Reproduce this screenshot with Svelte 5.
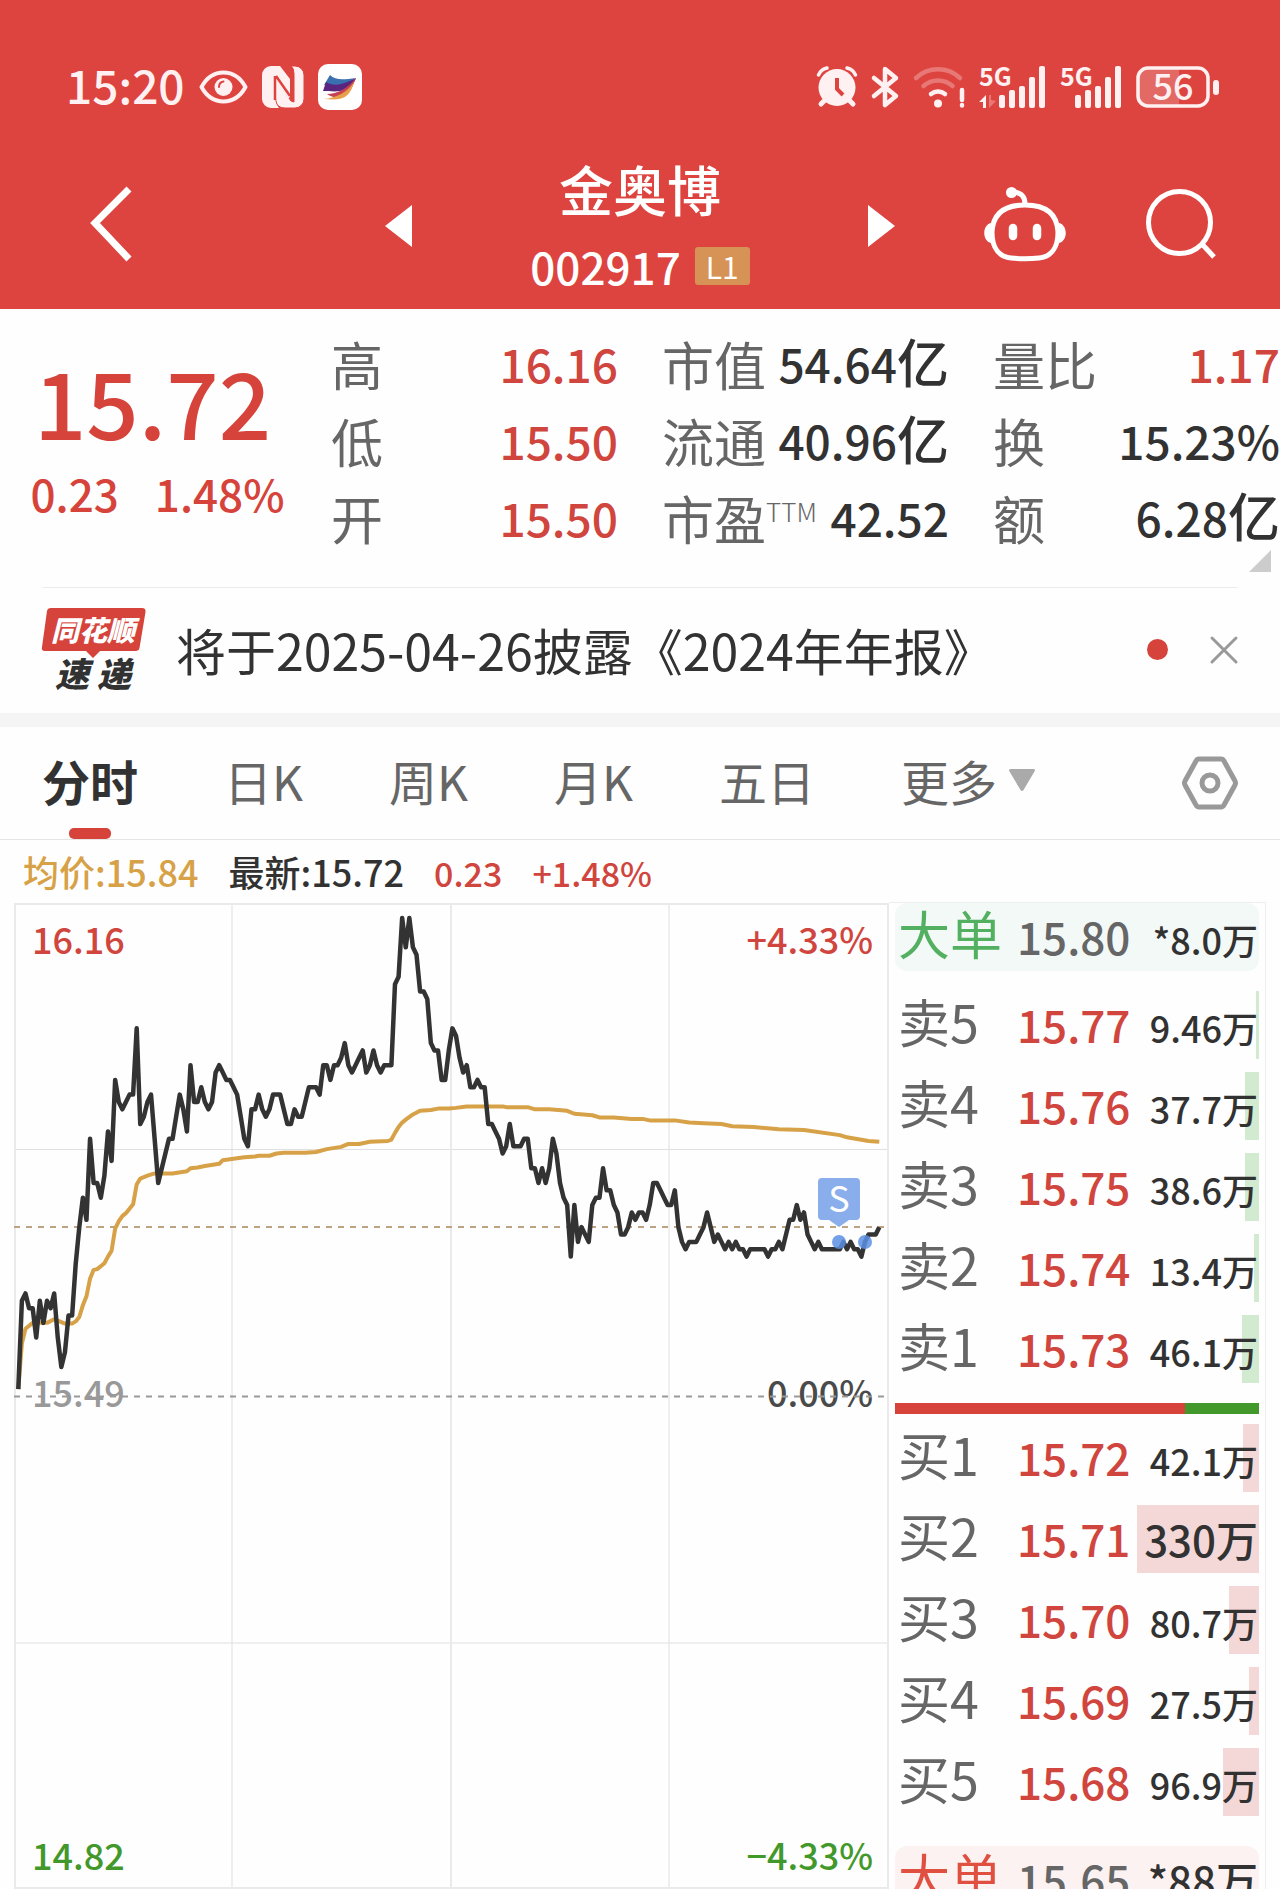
<script lang="ts">
  interface Order {
    label: string
    price: string
    volume: string
    amount: number
  }

  const base = 15.49
  const high = 16.16
  const low = 14.82

  const stats = [
    [
      { name: '高', value: '16.16', up: true },
      { name: '低', value: '15.50', up: true },
      { name: '开', value: '15.50', up: true }
    ],
    [
      { name: '市值', value: '54.64', unit: '亿' },
      { name: '流通', value: '40.96', unit: '亿' },
      { name: '市盈', sup: 'TTM', value: '42.52' }
    ],
    [
      { name: '量比', value: '1.17', up: true },
      { name: '换', value: '15.23%' },
      { name: '额', value: '6.28', unit: '亿' }
    ]
  ]

  const tabs = ['分时', '日K', '周K', '月K', '五日']
  let active = $state('分时')
  let noticeOpen = $state(true)

  const asks: Order[] = [
    { label: '卖5', price: '15.77', volume: '9.46万', amount: 9.46 },
    { label: '卖4', price: '15.76', volume: '37.7万', amount: 37.7 },
    { label: '卖3', price: '15.75', volume: '38.6万', amount: 38.6 },
    { label: '卖2', price: '15.74', volume: '13.4万', amount: 13.4 },
    { label: '卖1', price: '15.73', volume: '46.1万', amount: 46.1 }
  ]

  const bids: Order[] = [
    { label: '买1', price: '15.72', volume: '42.1万', amount: 42.1 },
    { label: '买2', price: '15.71', volume: '330万', amount: 330 },
    { label: '买3', price: '15.70', volume: '80.7万', amount: 80.7 },
    { label: '买4', price: '15.69', volume: '27.5万', amount: 27.5 },
    { label: '买5', price: '15.68', volume: '96.9万', amount: 96.9 }
  ]

  const maxAmount = Math.max(...[...asks, ...bids].map((o) => o.amount))
  const depth = (o: Order) => (o.amount / maxAmount) * 33.5

  // one value per minute, in cents above the previous close
  const ticks = [
    1, 13, 14, 12, 12, 8, 13, 10, 13, 12, 14, 8, 4, 6, 11, 11, 18, 23, 27, 24,
    35, 29, 29, 27, 30, 36, 32, 43, 40, 39, 40, 41, 41, 50, 37, 38, 40, 41, 35, 29,
    31, 33, 35, 35, 38, 41, 39, 36, 45, 40, 40, 42, 40, 39, 40, 44, 45, 44, 43, 43,
    42, 41, 38, 35, 34, 39, 39, 41, 39, 38, 39, 41, 41, 41, 39, 37, 37, 39, 38, 38,
    40, 42, 42, 42, 41, 45, 45, 43, 45, 45, 46, 48, 45, 44, 45, 46, 47, 44, 45, 47,
    45, 44, 45, 45, 45, 56, 57, 65, 61, 65, 61, 60, 55, 55, 54, 48, 47, 47, 43, 43,
    47, 50, 49, 46, 44, 45, 42, 42, 43, 42, 42, 37, 37, 36, 35, 33, 34, 37, 34, 34,
    34, 35, 35, 31, 31, 29, 31, 29, 31, 35, 33, 29, 27, 26, 19, 26, 21, 23, 22, 21,
    26, 27, 27, 31, 28, 28, 26, 25, 22, 22, 23, 25, 24, 25, 25, 24, 26, 29, 29, 28,
    27, 26, 26, 28, 23, 21, 20, 21, 21, 21, 22, 23, 25, 23, 21, 22, 21, 20, 21, 20,
    21, 20, 20, 19, 20, 20, 20, 20, 20, 19, 20, 20, 21, 20, 22, 24, 24, 26, 24, 25,
    22, 21, 20, 21, 20, 20, 20, 20, 20, 20, 21, 20, 21, 20, 20, 19, 21, 22, 22, 22,
    23
  ]

  // average price: [minute, cents above the previous close]
  const average = [
    [0, 1], [1, 7.2], [2, 9.2], [4, 10], [8, 10], [10, 10.5], [13, 9.9], [15, 9.9],
    [16, 10.2], [17, 10.8], [18, 12.4], [19, 13.6], [20, 16], [21, 17.2], [22, 17.3],
    [24, 18.1], [25, 19], [26, 19.8], [27, 22.8], [28, 23.8], [29, 24.5], [30, 24.9],
    [31, 25.5], [32, 26.1], [33, 28.8], [34, 29.6], [36, 30], [38, 30.3], [43, 30.3],
    [47, 30.6], [48, 31], [50, 31.1], [52, 31.3], [56, 31.6], [57, 32.1], [63, 32.5],
    [66, 32.6], [67, 32.7], [70, 32.7], [72, 33], [74, 33.1], [80, 33.1], [83, 33.2],
    [86, 33.6], [90, 33.9], [92, 34.3], [95, 34.3], [98, 34.6], [103, 34.7],
    [104, 34.9], [105, 35.8], [106, 36.6], [107, 37.2], [108, 37.6], [110, 38.3],
    [112, 38.8], [115, 38.9], [117, 39.1], [120, 39.1], [122, 39.2], [125, 39.4],
    [135, 39.4], [136, 39.3], [142, 39.3], [144, 39], [148, 39], [153, 38.8],
    [155, 38.4], [160, 38.2], [162, 37.9], [166, 37.9], [171, 37.7], [174, 37.7],
    [176, 37.5], [183, 37.5], [187, 37.2], [191, 37.1], [196, 37], [199, 36.7],
    [205, 36.6], [212, 36.3], [219, 36.2], [229, 35.5], [231, 35.2], [237, 34.7],
    [240, 34.6]
  ]

  const px = (minute: number) => 4.3 + minute * 3.5875
  const py = (cents: number) => 494.5 - cents * 7.363

  const priceLine = ticks.map((t, i) => `${px(i)},${py(t)}`).join(' ')
  const averageLine = average.map(([m, t]) => `${px(m)},${py(t)}`).join(' ')
</script>

{#snippet orderRow(o: Order, side: string)}
  <tr class="order">
    <th scope="row">{o.label}</th>
    <td class="price up">{o.price}</td>
    <td class="volume" class:large={o.amount >= 100}>{o.volume}</td>
    <td class="depth {side}" style="width: {depth(o)}%"></td>
  </tr>
{/snippet}

<div class="page">
  <header>
    <div class="status">
      <div class="status-group left">
        <span class="clock">15:20</span>
        <svg width="49" height="34" viewBox="0 0 49 34" fill="none" stroke="#fff1f1" stroke-width="4">
          <path d="M2.5 17C8 7 16 2.500 24.500 2.500S41 7 46.500 17C41 27 33 31.500 24.500 31.500S8 27 2.500 17z" stroke-linejoin="round" />
          <circle cx="24.500" cy="17" r="9" fill="#fff1f1" stroke="none" />
          <path d="M20 17c0-3 1.500-5 4.500-5.500" stroke="#dd443f" stroke-width="2" stroke-linecap="round" />
        </svg>
        <svg width="42" height="42" viewBox="0 0 42 42" fill="#fff1f1">
          <path d="M9 0h9l10 13v19L15 13v22q0 5 2 7H9a9 9 0 0 1-9-9V9a9 9 0 0 1 9-9z" />
          <path d="M29 0h4a9 9 0 0 1 9 9v24a9 9 0 0 1-9 9H23q-8 0-9-7V14l15 21 3 1V8q0-6-3-8z" stroke="#dd443f" stroke-width="1" />
          <path d="M14 11v22l3 6V20l10 13V16z" fill="#fff1f1" />
          <path d="M14 10l14 20M13 10v24" stroke="#dd443f" stroke-width="2.500" fill="none" />
        </svg>
        <svg width="44" height="46" viewBox="0 0 44 46">
          <rect width="44" height="46" rx="10" fill="#fff" />
          <path d="M6 21l6-10c5 5 12 5 26 3-5 2-7 6-11 8-6 3-12 1-21-1z" fill="#3a6fb0" />
          <path d="M5 27l3-9c8 5 16 3 30-4-3 8-8 12-16 13-6 1-11 0-17 0z" fill="#59257f" />
          <path d="M9 30c10 0 20-5 29-16-4 10-7 17-15 19-5 1-10 0-14-3z" fill="#c64352" />
          <path d="M6 35c12-1 24-7 30-17-2 9-7 16-15 17-5 1-10 0-15 0z" fill="#e8a14a" />
        </svg>
      </div>
      <div class="status-group right">
        <svg width="42" height="42" viewBox="0 0 42 42" fill="none" stroke="#fff1f1" stroke-linecap="round">
          <circle cx="21" cy="21.500" r="18.500" fill="#fff1f1" stroke="none" />
          <path d="M2.500 9A12 12 0 0 1 11 2M39.500 9A12 12 0 0 0 31 2" stroke-width="3.500" />
          <path d="M5 38l4-4M37 38l-4-4" stroke-width="5" />
          <path d="M21 12v11l6 6" stroke="#dd443f" stroke-width="4" stroke-linecap="butt" />
        </svg>
        <svg width="27" height="42" viewBox="0 0 27 42" fill="none" stroke="#fff1f1" stroke-width="4.500" stroke-linecap="round" stroke-linejoin="round">
          <path d="M2 12l22 18-11 9V3l11 9L2 30" />
        </svg>
        <svg width="52" height="42" viewBox="0 0 52 42" fill="none" stroke="#fff1f1" stroke-width="4.500" stroke-linecap="round">
          <path d="M3 12a32 32 0 0 1 44 0M10.500 20a22 22 0 0 1 29 0" opacity=".3" />
          <path d="M18 28a11 11 0 0 1 14 0" />
          <circle cx="25" cy="37.500" r="4" fill="#fff1f1" stroke="none" />
          <path d="M49 24v10M49 39v.5" />
        </svg>
        <svg width="67" height="42" viewBox="0 0 67 42" fill="#fff1f1">
          <text class="network" x="0" y="20">5G</text>
          <path d="M0 36l7-7v13H4v-6z" />
          <path d="M10 29v13l7-7-5-1v-5z" opacity=".3" />
          <rect x="20" y="29" width="6" height="13" rx="2" />
          <rect x="30" y="24" width="6" height="18" rx="2" />
          <rect x="40" y="20" width="6" height="22" rx="2" />
          <rect x="50" y="11" width="6" height="31" rx="2" />
          <rect x="60" y="0" width="6" height="42" rx="2" />
        </svg>
        <svg width="62" height="42" viewBox="0 0 62 42" fill="#fff1f1">
          <text class="network" x="0" y="20">5G</text>
          <rect x="15" y="29" width="6" height="13" rx="2" />
          <rect x="25" y="24" width="6" height="18" rx="2" />
          <rect x="35" y="20" width="6" height="22" rx="2" />
          <rect x="45" y="11" width="6" height="31" rx="2" />
          <rect x="55" y="0" width="6" height="42" rx="2" />
        </svg>
        <svg class="battery" width="84" height="42" viewBox="0 0 84 42">
          <path d="M12 3h31v36H12a9 9 0 0 1-9-9V12a9 9 0 0 1 9-9z" fill="#fff" opacity=".2" />
          <rect x="2" y="2" width="70" height="38" rx="10" fill="none" stroke="#fff1f1" stroke-width="3.500" />
          <rect x="77" y="14" width="6" height="15" rx="3" fill="#fff1f1" />
          <text x="37" y="34" text-anchor="middle">56</text>
        </svg>
      </div>
    </div>

    <nav>
      <button class="icon back" aria-label="返回">
        <svg width="42" height="76" viewBox="0 0 42 76" fill="none" stroke="#fff" stroke-width="7">
          <path d="M39 3L5 37l34 36" />
        </svg>
      </button>
      <div class="stock">
        <button class="icon" aria-label="上一只">
          <svg width="27" height="42" viewBox="0 0 27 42" fill="#fff"><path d="M27 0v42L0 21z" /></svg>
        </button>
        <div class="name">
          <h1>金奥博</h1>
          <div class="code">002917 <span class="level">L1</span></div>
        </div>
        <button class="icon" aria-label="下一只">
          <svg width="27" height="42" viewBox="0 0 27 42" fill="#fff"><path d="M0 0v42l27-21z" /></svg>
        </button>
      </div>
      <div class="actions">
        <button class="icon" aria-label="智能助手">
          <svg width="82" height="76" viewBox="0 0 82 76" fill="none" stroke="#fff" stroke-width="5" stroke-linecap="round">
            <path d="M41 19c17 0 32 6 33 27 0 17-8 25-19 26-9 1-19 1-28 0C16 71 8 63 8 46c1-21 16-27 33-27z" />
            <path d="M41 18c0-7-3-11-11-12" />
            <circle cx="27.500" cy="6.500" r="5.500" fill="#fff" stroke="none" />
            <path d="M7 37c-9 2-9 18 0 20zM75 37c9 2 9 18 0 20z" fill="#fff" stroke="none" />
            <path d="M29 42v8M53 42v8" stroke-width="8.500" />
          </svg>
        </button>
        <button class="icon" aria-label="搜索">
          <svg width="70" height="70" viewBox="0 0 70 70" fill="none" stroke="#fff" stroke-width="5">
            <circle cx="33.500" cy="33.500" r="31" />
            <path d="M56 55l12 13" />
          </svg>
        </button>
      </div>
    </nav>
  </header>

  <section class="quote">
    <div class="last">
      <div class="last-price">15.72</div>
      <div class="change"><span>0.23</span><span>1.48%</span></div>
    </div>
    {#each stats as column}
      <dl>
        {#each column as item}
          <div>
            <dt>{item.name}{#if item.sup}<sup>{item.sup}</sup>{/if}</dt>
            <dd class:up={item.up}>{item.value}{#if item.unit}<span class="unit">{item.unit}</span>{/if}</dd>
          </div>
        {/each}
      </dl>
    {/each}
    <span class="corner"></span>
  </section>

  {#if noticeOpen}
    <section class="notice">
      <svg class="logo" width="104" height="84" viewBox="0 0 104 84">
        <path d="M9 0h91q4 0 3.500 4l-6 36q-.5 3-4 3H58l-7 7-7-7H3q-4 0-3-4L5 3q.5-3 4-3z" fill="#d6433b" />
        <text x="51" y="33" text-anchor="middle" fill="#fff">同花顺</text>
        <text class="dark" x="51" y="79" text-anchor="middle">速 递</text>
      </svg>
      <a href="#report">将于2025-04-26披露《2024年年报》</a>
      <span class="dot"></span>
      <button class="icon" aria-label="关闭" onclick={() => (noticeOpen = false)}>
        <svg width="28" height="28" viewBox="0 0 28 28" stroke="#999" stroke-width="3" stroke-linecap="round">
          <path d="M2 2l24 24M26 2L2 26" />
        </svg>
      </button>
    </section>
  {/if}

  <div class="tabs">
    {#each tabs as tab}
      <button class="tab" class:active={active === tab} onclick={() => (active = tab)}>{tab}</button>
    {/each}
    <button class="tab more">
      更多
      <svg width="26" height="22" viewBox="0 0 26 22" fill="#aaa"><path d="M2 0h22q3 0 1.500 2.500L14.500 21q-1.500 2-3 0L.5 2.500Q-1 0 2 0z" /></svg>
    </button>
    <button class="icon settings" aria-label="设置">
      <svg width="56" height="54" viewBox="0 0 56 54" fill="none" stroke="#999" stroke-width="5" stroke-linejoin="round">
        <path d="M17 3h22q2 0 3 2l11 20q1 2 0 4L42 49q-1 2-3 2H17q-2 0-3-2L3 29q-1-2 0-4L14 5q1-2 3-2z" />
        <circle cx="28" cy="27" r="8" />
      </svg>
    </button>
  </div>

  <div class="legend">
    <span class="avg">均价:15.84</span>
    <span>最新:15.72</span>
    <span class="up">0.23</span>
    <span class="up">+1.48%</span>
  </div>

  <main>
    <svg class="chart" viewBox="0 0 875 987">
      <g fill="none" stroke="#e0e0e0">
        <path d="M218 2v985M655 2v985M1 247.500h873M1 741h873" />
        <path d="M437 2v985M1 2h873M1 1v986M874 1v986M1 986h873" stroke="#eaeaea" stroke-width="2" />
      </g>
      <text class="rise" x="18" y="52">{high.toFixed(2)}</text>
      <text class="rise" x="859" y="52" text-anchor="end">+4.33%</text>
      <text class="flat" x="18" y="505">{base.toFixed(2)}</text>
      <text class="zero" x="859" y="505" text-anchor="end">0.00%</text>
      <text class="fall" x="18" y="968">{low.toFixed(2)}</text>
      <text class="fall" x="859" y="968" text-anchor="end">−4.33%</text>
      <path d="M0 325h870" stroke="#bda382" stroke-width="2" stroke-dasharray="6 6" />
      <path d="M0 494.500h870" stroke="#999" stroke-width="2" stroke-dasharray="6 6" />
      <polyline points={averageLine} fill="none" stroke="#d7a147" stroke-width="4" stroke-linejoin="round" />
      <polyline points={priceLine} fill="none" stroke="#333" stroke-width="4.500" stroke-linejoin="round" />
      <g fill="#5b8fe3">
        <path d="M808 276h34q4 0 4 4v34q0 4-4 4h-7l-10 7-10-7h-7q-4 0-4-4v-34q0-4 4-4z" opacity=".72" />
        <circle cx="825" cy="340" r="7" opacity=".85" />
        <circle cx="851" cy="340" r="7" opacity=".85" />
      </g>
      <text class="marker" x="825" y="310" text-anchor="middle">S</text>
    </svg>

    <table class="book">
      <tbody>
        <tr class="order big sell">
          <th scope="row">大单</th>
          <td class="price">15.80</td>
          <td class="volume">*8.0万</td>
        </tr>
      </tbody>
      <tbody class="asks">
        {#each asks as o}
          {@render orderRow(o, 'ask')}
        {/each}
      </tbody>
      <tbody>
        <tr class="ratio"><td class="buying" style="width: 79.8%"></td></tr>
      </tbody>
      <tbody class="bids">
        {#each bids as o}
          {@render orderRow(o, 'bid')}
        {/each}
      </tbody>
      <tbody>
        <tr class="order big buy">
          <th scope="row">大单</th>
          <td class="price">15.65</td>
          <td class="volume large">*88万</td>
        </tr>
      </tbody>
    </table>
  </main>
</div>

<style>
  :global(body) {
    background: #fff;
  }

  .page {
    height: 100vh;
    overflow: hidden;
    background: #fefefe;
    color: #323232;
    font-family: "Noto Sans CJK SC", "Noto Sans", sans-serif;
  }

  svg {
    display: block;
    flex: none;
    overflow: visible;
  }

  button {
    border: 0;
    padding: 0;
    background: none;
    font: inherit;
    color: inherit;
    cursor: pointer;
  }

  .up {
    color: #d0453d;
  }

  header {
    background: #dd443f;
    color: #fff;
  }

  .status {
    display: flex;
    justify-content: space-between;
    padding: 58px 60px 0 66px;
  }

  .status-group {
    display: flex;
    align-items: center;
    gap: 14px;
    height: 58px;
  }

  .clock {
    padding-bottom: 6px;
    color: #fff1f1;
    font-size: 46px;
    line-height: 52px;
    font-weight: 500;
  }

  .network {
    font-size: 25px;
    font-weight: 700;
  }

  .battery text {
    fill: #fff1f1;
    font-size: 36px;
    font-weight: 500;
  }

  nav {
    display: grid;
    grid-template-columns: 1fr 510px 1fr;
    align-items: center;
    padding: 33px 64px 6px 90px;
  }

  .back {
    justify-self: start;
    padding-bottom: 4px;
  }

  .stock {
    display: flex;
    align-items: center;
    justify-content: space-between;
    margin: 0 13px 0 -13px;
  }

  .name {
    text-align: center;
  }

  h1 {
    margin: 0;
    font-size: 54px;
    line-height: 80px;
    font-weight: 500;
  }

  .code {
    display: flex;
    align-items: center;
    justify-content: center;
    gap: 14px;
    font-size: 44px;
    line-height: 74px;
    font-weight: 500;
  }

  .level {
    padding: 0 11px;
    border-radius: 3px;
    background: #d79355;
    font-size: 30px;
    line-height: 38px;
    font-weight: 400;
  }

  .actions {
    display: flex;
    align-items: center;
    justify-content: flex-end;
    gap: 80px;
    padding-bottom: 4px;
  }

  .quote {
    position: relative;
    display: grid;
    grid-template-columns: repeat(4, 1fr);
    gap: 44px;
    padding: 16px 0 31px;
  }

  .last {
    padding: 24px 0 0 18px;
    color: #d6433b;
    text-align: center;
    font-weight: 500;
  }

  .last-price {
    font-size: 92px;
    line-height: 102px;
  }

  .change {
    display: flex;
    justify-content: center;
    gap: 36px;
    padding-left: 10px;
    font-size: 44px;
    line-height: 84px;
  }

  dl {
    margin: 0;
  }

  dl div {
    display: flex;
    justify-content: space-between;
    height: 77px;
    line-height: 77px;
    white-space: nowrap;
  }

  dt {
    color: #666;
    font-size: 52px;
  }

  sup {
    font-size: 26px;
    line-height: 0;
    font-weight: 300;
  }

  dd {
    margin: 0;
    font-size: 46px;
    font-weight: 500;
  }

  .unit {
    font-size: 52px;
    line-height: 0;
  }

  .corner {
    position: absolute;
    right: 9px;
    bottom: 15px;
    width: 22px;
    height: 22px;
    background: #ccc;
    clip-path: polygon(100% 0, 100% 100%, 0 100%);
  }

  .notice {
    display: flex;
    align-items: center;
    margin: 0 42px;
    padding-bottom: 2px;
    border-top: 1px solid #ececec;
    line-height: 123px;
  }

  .logo {
    margin-right: 30px;
    font-size: 28px;
    font-weight: 900;
    font-style: italic;
  }

  .logo .dark {
    fill: #323232;
    font-size: 34px;
  }

  .notice a {
    flex: 1;
    color: inherit;
    font-size: 50px;
    text-decoration: none;
    white-space: nowrap;
  }

  .dot {
    width: 21px;
    height: 21px;
    margin-right: 42px;
    border-radius: 50%;
    background: #d6433b;
  }

  .tabs {
    display: flex;
    align-items: center;
    gap: 86px;
    padding: 0 42px;
    border-top: 14px solid #f4f4f4;
    border-bottom: 1px solid #e5e5e5;
  }

  .tab {
    position: relative;
    padding-bottom: 6px;
    color: #666;
    font-size: 48px;
    line-height: 106px;
    white-space: nowrap;
  }

  .tab.active {
    color: #323232;
    font-weight: 700;
  }

  .tab.active::after {
    content: '';
    position: absolute;
    left: 50%;
    bottom: 0;
    width: 42px;
    height: 11px;
    margin-left: -21px;
    border-radius: 5px;
    background: #d6433b;
  }

  .more {
    display: flex;
    align-items: center;
    gap: 12px;
  }

  .settings {
    margin-left: auto;
  }

  .legend {
    display: flex;
    align-items: baseline;
    gap: 30px;
    height: 62px;
    padding: 0 23px;
    font-size: 36px;
    line-height: 63px;
    font-weight: 500;
  }

  .legend .up {
    font-size: 34px;
  }

  .avg {
    color: #d7a147;
  }

  main {
    display: grid;
    grid-template-columns: 875fr 377fr;
    align-items: start;
    padding: 0 14px;
  }

  .chart {
    width: 100%;
    font-size: 36px;
    font-weight: 500;
  }

  .rise {
    fill: #d0453d;
  }

  .flat {
    fill: #999;
  }

  .zero {
    fill: #4a4a4a;
  }

  .fall {
    fill: #43982b;
  }

  .marker {
    fill: #fff;
    font-weight: 400;
  }

  .book {
    display: block;
    padding: 0 6px;
    border: 1px solid #eee;
    border-left: 0;
  }

  tbody {
    display: flex;
    flex-direction: column;
    gap: 13px;
  }

  .asks {
    padding: 20px 0;
  }

  .bids {
    padding: 10px 0 30px;
  }

  .order {
    position: relative;
    display: grid;
    grid-template-columns: 119px 112px 1fr;
    align-items: baseline;
    height: 68px;
    padding: 0 1px 0 3px;
    line-height: 60px;
    white-space: nowrap;
  }

  th {
    padding: 0;
    color: #666;
    font-size: 52px;
    font-weight: 400;
    text-align: left;
  }

  td {
    padding: 0;
  }

  .price {
    font-size: 44px;
    font-weight: 500;
  }

  .volume {
    z-index: 1;
    font-size: 36px;
    font-weight: 500;
    text-align: right;
  }

  .volume.large {
    font-size: 42px;
  }

  .depth {
    position: absolute;
    top: 0;
    right: 0;
    bottom: 0;
  }

  .depth.ask {
    background: #d2ebd0;
  }

  .depth.bid {
    background: #f4d7d7;
  }

  .big {
    border-radius: 12px;
  }

  .big .price {
    color: #666;
  }

  .big.sell {
    background: #f2f9f6;
  }

  .big.sell th {
    color: #52b060;
  }

  .big.buy {
    background: #fdf2f2;
  }

  .big.buy th {
    color: #e05040;
  }

  .ratio {
    display: flex;
    height: 11px;
    background: #43982b;
  }

  .buying {
    background: #d6433b;
  }
</style>
